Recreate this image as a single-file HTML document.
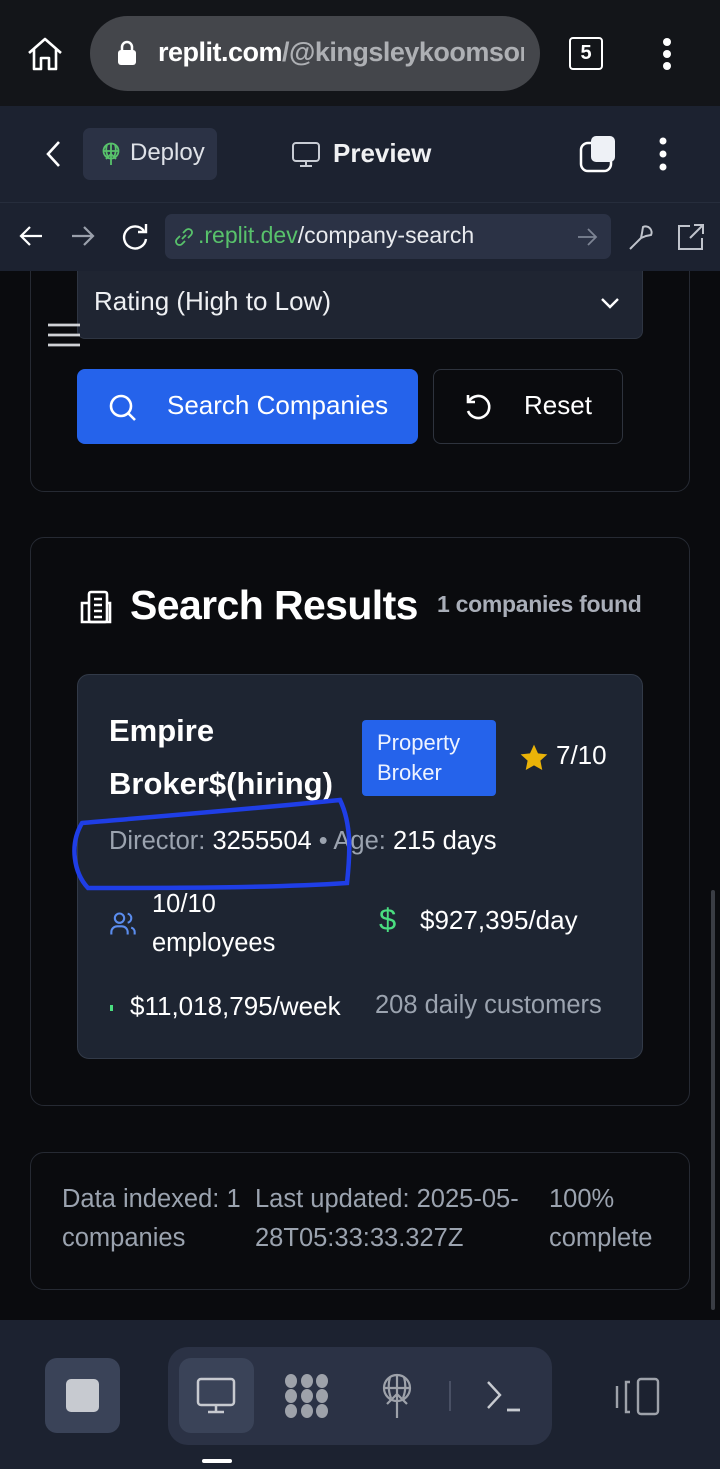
<!DOCTYPE html>
<html><head><meta charset="utf-8"><style>
*{margin:0;padding:0;box-sizing:border-box}
body{width:720px;height:1469px;background:#0a0b0e;font-family:"Liberation Sans",sans-serif;color:#fff;position:relative;overflow:hidden}
.a{position:absolute}
svg{position:absolute;overflow:visible}
</style></head><body>
<!-- page -->
<div class="a" style="left:30px;top:240px;width:660px;height:252px;border:1.5px solid #262a33;border-radius:14px"></div>
<div class="a" style="left:77px;top:270px;width:566px;height:69px;background:#1f2532;border:1px solid #2e3542;border-radius:0 0 8px 8px"></div>
<div class="a" style="left:94px;top:286px;font-size:26px;color:#eef0f3">Rating (High to Low)</div>
<svg style="left:600px;top:297px" width="20" height="14"><path d="M2 2L10 10L18 2" fill="none" stroke="#fff" stroke-width="2.4"/></svg>
<svg style="left:48px;top:322px" width="32" height="26"><path d="M0 3H32M0 13H32M0 23H32" stroke="#d0d2d6" stroke-width="2.8"/></svg>
<div class="a" style="left:77px;top:369px;width:341px;height:75px;background:#2563eb;border-radius:8px"></div>
<svg style="left:108px;top:393px" width="30" height="30"><circle cx="13" cy="13" r="10" fill="none" stroke="#fff" stroke-width="2.6"/><path d="M20 20L27 27" stroke="#fff" stroke-width="2.6"/></svg>
<div class="a" style="left:167px;top:390px;font-size:26px;color:#fff">Search Companies</div>
<div class="a" style="left:433px;top:369px;width:190px;height:75px;border:1.5px solid #2e333d;border-radius:8px"></div>
<svg style="left:463px;top:392px" width="32" height="32"><path d="M6 9A11 11 0 1 1 5 19" fill="none" stroke="#fff" stroke-width="2.6"/><path d="M5 3V10H12" fill="none" stroke="#fff" stroke-width="2.6"/></svg>
<div class="a" style="left:524px;top:390px;font-size:26px;color:#fff">Reset</div>

<div class="a" style="left:30px;top:537px;width:660px;height:569px;border:1.5px solid #262a33;border-radius:14px"></div>
<svg style="left:78px;top:589px" width="36" height="36" viewBox="0 0 36 36"><g fill="none" stroke="#fff" stroke-width="2.6"><rect x="11" y="3" width="18" height="30" rx="2"/><path d="M11 14H4V33H32V14H29M16 10H24M16 16H24M16 22H24M16 28H24"/></g></svg>
<div class="a" style="left:130px;top:582px;font-size:41px;font-weight:bold;letter-spacing:-0.6px">Search Results</div>
<div class="a" style="left:437px;top:591px;font-size:23px;color:#a9aeb8;font-weight:bold;letter-spacing:-0.3px">1 companies found</div>

<div class="a" style="left:77px;top:674px;width:566px;height:385px;background:#1e2532;border:1.5px solid #323a48;border-radius:12px"></div>
<div class="a" style="left:109px;top:704px;font-size:31px;font-weight:bold;line-height:53px">Empire<br>Broker$(hiring)</div>
<div class="a" style="left:362px;top:720px;width:134px;height:76px;background:#2563eb;border-radius:4px;padding:8px 15px;font-size:22px;line-height:30px;color:#eef3ff">Property<br>Broker</div>
<svg style="left:518px;top:742px" width="32" height="32" viewBox="0 0 24 24"><path d="M12 2L15 8.5L22 9.3L16.8 14L18.2 21L12 17.5L5.8 21L7.2 14L2 9.3L9 8.5Z" fill="#eab308"/></svg>
<div class="a" style="left:556px;top:740px;font-size:26px">7/10</div>
<div class="a" style="left:109px;top:827px;font-size:25.5px;color:#9ba3af;white-space:nowrap">Director: <span style="color:#fff">3255504</span> • Age: <span style="color:#fff">215 days</span></div>
<svg style="left:72px;top:795px" width="282" height="100"><path d="M10 28C80 22 200 12 268 5C280 30 278 60 275 88C200 93 100 93 16 93C2 78 -3 50 10 28" fill="none" stroke="#1f3ee6" stroke-width="4.5" stroke-linecap="round"/></svg>
<svg style="left:109px;top:910px" width="28" height="28" viewBox="0 0 24 24"><g fill="none" stroke="#5b8def" stroke-width="1.8"><circle cx="9" cy="7" r="4"/><path d="M2 21v-2a5 5 0 0 1 5-5h4a5 5 0 0 1 5 5v2M16 3.1a4 4 0 0 1 0 7.8M22 21v-2a4 4 0 0 0-3-3.9"/></g></svg>
<div class="a" style="left:152px;top:885px;font-size:25.5px;line-height:39px">10/10<br>employees</div>
<div class="a" style="left:379px;top:902px;font-size:31px;color:#4ade80">$</div>
<div class="a" style="left:420px;top:905px;font-size:26px">$927,395/day</div>
<div class="a" style="left:110px;top:1005px;width:3px;height:6px;background:#4ade80"></div>
<div class="a" style="left:130px;top:991px;font-size:26px">$11,018,795/week</div>
<div class="a" style="left:375px;top:991px;font-size:25.5px;color:#9ba3af">208 daily customers</div>

<div class="a" style="left:30px;top:1152px;width:660px;height:138px;border:1.5px solid #262a33;border-radius:14px"></div>
<div class="a" style="left:62px;top:1180px;font-size:25.5px;line-height:39px;color:#9ba3af">Data indexed: 1<br>companies</div>
<div class="a" style="left:255px;top:1180px;font-size:25.5px;line-height:39px;color:#9ba3af;white-space:nowrap">Last updated: 2025-05-<br>28T05:33:33.327Z</div>
<div class="a" style="left:549px;top:1180px;font-size:25.5px;line-height:39px;color:#9ba3af">100%<br>complete</div>
<div class="a" style="left:711px;top:890px;width:4px;height:420px;background:#3a3d44;border-radius:2px"></div>

<!-- browser top -->
<div class="a" style="left:0;top:0;width:720px;height:106px;background:#131519"></div>
<svg style="left:26px;top:36px" width="38" height="36" viewBox="0 0 38 36"><path d="M3 17 L19 3 L35 17 M8 13 V33 H15 V22 H23 V33 H30 V13" fill="none" stroke="#fff" stroke-width="2.6" stroke-linejoin="round"/></svg>
<div class="a" style="left:90px;top:16px;width:450px;height:75px;border-radius:38px;background:#44464b"></div>
<svg style="left:117px;top:40px" width="20" height="26"><rect x="1" y="10" width="18" height="15" rx="3" fill="#fff"/><path d="M5 11 V7 a5 5 0 0 1 10 0 V11" fill="none" stroke="#fff" stroke-width="2.5"/></svg>
<div class="a" style="left:158px;top:37px;width:366px;overflow:hidden;white-space:nowrap;font-size:27px;font-weight:bold;letter-spacing:-0.5px"><span style="color:#fff">replit.com</span><span style="color:#aeb0b4">/@kingsleykoomson</span></div>
<div class="a" style="left:569px;top:37px;width:34px;height:33px;border:2.5px solid #fff;border-radius:4px;font-size:20px;font-weight:bold;text-align:center;line-height:28px">5</div>
<svg style="left:660px;top:38px" width="14" height="32"><circle cx="7" cy="4" r="4" fill="#fff"/><circle cx="7" cy="16" r="4" fill="#fff"/><circle cx="7" cy="28" r="4" fill="#fff"/></svg>
<!-- replit header -->
<div class="a" style="left:0;top:106px;width:720px;height:165px;background:#1c2230"></div>
<div class="a" style="left:0;top:202px;width:720px;height:1px;background:#262d3c"></div>
<svg style="left:44px;top:140px" width="18" height="28"><path d="M15 2 L4 14 L15 26" fill="none" stroke="#fff" stroke-width="2.6"/></svg>
<div class="a" style="left:83px;top:128px;width:134px;height:52px;background:#2b3245;border-radius:7px"></div>
<svg style="left:100px;top:142px" width="22" height="24" viewBox="0 0 22 24"><g fill="none" stroke="#58c26b" stroke-width="1.8"><circle cx="11" cy="9" r="7.5"/><path d="M3.5 9H18.5M11 1.5V23M7 2.5Q5 9 8 15M15 2.5Q17 9 14 15M6 17L11 12L16 17"/></g></svg>
<div class="a" style="left:130px;top:139px;font-size:24px;color:#dfe2e8">Deploy</div>
<svg style="left:291px;top:141px" width="30" height="28"><rect x="2" y="2" width="26" height="18" rx="3" fill="none" stroke="#c8ccd4" stroke-width="2"/><path d="M15 20V25M9 25H21" stroke="#c8ccd4" stroke-width="2"/></svg>
<div class="a" style="left:333px;top:138px;font-size:26px;font-weight:bold;color:#f0f1f3">Preview</div>
<svg style="left:578px;top:134px" width="40" height="40"><rect x="3" y="9" width="30" height="28" rx="7" fill="none" stroke="#fff" stroke-width="2.5"/><rect x="13" y="2" width="24" height="26" rx="5" fill="#eef1f6"/></svg>
<svg style="left:656px;top:136px" width="14" height="36"><circle cx="7" cy="5" r="3.5" fill="#fff"/><circle cx="7" cy="18" r="3.5" fill="#fff"/><circle cx="7" cy="31" r="3.5" fill="#fff"/></svg>
<!-- url row -->
<svg style="left:18px;top:224px" width="26" height="24"><path d="M24 12H3M12 3L3 12L12 21" fill="none" stroke="#fff" stroke-width="2.2"/></svg>
<svg style="left:70px;top:224px" width="26" height="24"><path d="M2 12H23M14 3L23 12L14 21" fill="none" stroke="#9aa0ab" stroke-width="2.2"/></svg>
<svg style="left:120px;top:222px" width="30" height="30"><path d="M24 9A11 11 0 1 0 26 17" fill="none" stroke="#fff" stroke-width="2.4"/><path d="M26 2V10H18" fill="none" stroke="#fff" stroke-width="2.4"/></svg>
<div class="a" style="left:165px;top:214px;width:446px;height:45px;background:#2b3245;border-radius:7px"></div>
<svg style="left:173px;top:226px" width="22" height="22"><g fill="none" stroke="#58c26b" stroke-width="1.8"><path d="M9 13L13 9"/><path d="M7 10L4 13a3.5 3.5 0 0 0 5 5L12 15"/><path d="M10 7L13 4a3.5 3.5 0 0 1 5 5L15 12"/></g></svg>
<div class="a" style="left:198px;top:222px;font-size:23px;white-space:nowrap"><span style="color:#58c26b">.replit.dev</span><span style="color:#e8eaee">/company-search</span></div>
<svg style="left:576px;top:227px" width="22" height="20"><path d="M2 10H20M12 2L20 10L12 18" fill="none" stroke="#7d8494" stroke-width="1.8"/></svg>
<svg style="left:626px;top:222px" width="30" height="30"><path d="M4 27L15 16M17 5a6 6 0 0 1 8 8L20 14L15 16L16 11Z" fill="none" stroke="#c0c4cc" stroke-width="2"/></svg>
<svg style="left:676px;top:222px" width="30" height="30"><path d="M14 4H3V27H26V16M18 3H27V12M27 3L14 16" fill="none" stroke="#c0c4cc" stroke-width="2"/></svg>

<!-- bottom bar -->
<div class="a" style="left:0;top:1320px;width:720px;height:149px;background:#1c2230"></div>
<div class="a" style="left:45px;top:1358px;width:75px;height:75px;background:#3a4358;border-radius:12px"></div>
<div class="a" style="left:66px;top:1379px;width:33px;height:33px;background:#c7cad0;border-radius:5px"></div>
<div class="a" style="left:168px;top:1347px;width:384px;height:98px;background:#2b3245;border-radius:20px"></div>
<div class="a" style="left:179px;top:1358px;width:75px;height:75px;background:#3a4358;border-radius:12px"></div>
<svg style="left:196px;top:1377px" width="42" height="40"><rect x="2" y="2" width="36" height="26" rx="3" fill="none" stroke="#c7cad0" stroke-width="2.5"/><path d="M20 28V34M12 35H28" stroke="#c7cad0" stroke-width="2.5"/></svg>
<svg style="left:284px;top:1373px" width="46" height="46" viewBox="0 0 46 46"><g fill="#9ea2aa"><ellipse cx="7" cy="8" rx="6" ry="7"/><ellipse cx="23" cy="8" rx="6" ry="7"/><ellipse cx="38" cy="8" rx="6" ry="7"/><ellipse cx="7" cy="23" rx="6" ry="7"/><ellipse cx="23" cy="23" rx="6" ry="7"/><ellipse cx="38" cy="23" rx="6" ry="7"/><ellipse cx="7" cy="38" rx="6" ry="7"/><ellipse cx="23" cy="38" rx="6" ry="7"/><ellipse cx="38" cy="38" rx="6" ry="7"/></g></svg>
<svg style="left:378px;top:1372px" width="38" height="46" viewBox="0 0 38 46"><g fill="none" stroke="#9ea2aa" stroke-width="2.2"><circle cx="19" cy="16" r="13"/><path d="M6 16H32M19 3V46M12 5Q9 16 13 26M26 5Q29 16 25 26M9 32L19 22L29 32"/></g></svg>
<div class="a" style="left:449px;top:1381px;width:2px;height:30px;background:#495064"></div>
<svg style="left:486px;top:1380px" width="36" height="34"><path d="M2 2L14 15L2 28" fill="none" stroke="#c7cad0" stroke-width="2.4"/><path d="M21 30H34" stroke="#c7cad0" stroke-width="2.8"/></svg>
<svg style="left:614px;top:1377px" width="46" height="40"><g fill="none" stroke="#9ea2aa" stroke-width="2.4"><rect x="24" y="2" width="20" height="35" rx="3"/><path d="M16 5H12V35H16M3 9V31"/></g></svg>
<div class="a" style="left:202px;top:1459px;width:30px;height:4px;background:#fff;border-radius:2px"></div>
</body></html>
